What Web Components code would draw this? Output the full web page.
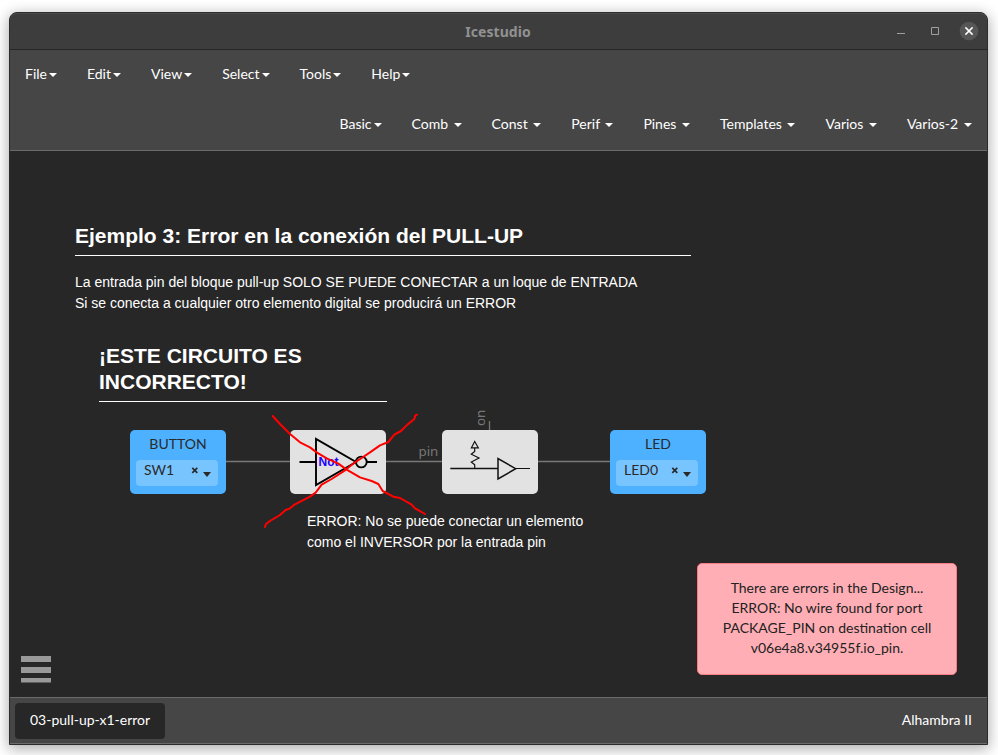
<!DOCTYPE html>
<html lang="es">
<head>
<meta charset="utf-8">
<title>Icestudio</title>
<style>
html,body{margin:0;height:100%;background:#fff}
body{box-sizing:border-box;width:998px;height:755px;padding:12px 10px 10px 9px;overflow:hidden;font:14px/20px Lato,sans-serif;color:#fff}
</style>
</head>
<body>
<ice-window></ice-window>
<script>
const define = (name, html) => customElements.define(name, class extends HTMLElement {
  constructor() {
    super();
    this.attachShadow({ mode: 'open' });
  }
  connectedCallback() {
    const t = document.createElement('template');
    t.innerHTML = html;
    this.shadowRoot.replaceChildren(t.content.cloneNode(true));
  }
});

define('ice-menu', `<style>
:host{display:block;padding:14px 15px 16px;white-space:pre}
i{display:inline-block;width:0;height:0;margin-left:2px;vertical-align:middle;border:4px solid transparent;border-top-color:#fff;border-bottom:0}
</style><slot></slot><i></i>`);

define('ice-titlebar', `<style>
:host{display:grid;grid-template-columns:1fr auto 1fr;align-items:center;height:37px;background:#3d3d3d;border-top:1px solid #4a4a4a;border-bottom:1px solid #262626;border-radius:7px 7px 0 0;box-sizing:border-box}
b{grid-column:2;font:bold 14px/20px "Noto Sans",sans-serif;color:#919191;letter-spacing:.05px;padding-top:1px;margin-right:1px}
svg{justify-self:end;margin:0 8px 2px 0}
</style><b><slot></slot></b>
<svg width="84" height="20" viewBox="0 0 84 20" fill="none"><path d="M2 12.5h8" stroke="#a0a0a0"/><path d="M36.5 6.5h7v7h-7z" stroke="#a0a0a0"/><circle cx="74" cy="10" r="9.3" fill="#565656"/><path d="M70.4 6.4l7.2 7.2M77.6 6.4l-7.2 7.2" stroke="#fff" stroke-width="1.5"/></svg>`);

define('ice-navbar', `<style>
:host{display:flex;flex-direction:column;height:101px;box-sizing:border-box;background:#464646;border-bottom:1px solid #6b6b6b}
nav{display:flex;height:50px}
.right{justify-content:flex-end;padding-right:.3px}
</style>
<nav><ice-menu>File</ice-menu><ice-menu>Edit</ice-menu><ice-menu>View</ice-menu><ice-menu>Select</ice-menu><ice-menu>Tools</ice-menu><ice-menu>Help</ice-menu></nav>
<nav class="right"><ice-menu>Basic</ice-menu><ice-menu>Comb </ice-menu><ice-menu>Const </ice-menu><ice-menu>Perif </ice-menu><ice-menu>Pines </ice-menu><ice-menu>Templates </ice-menu><ice-menu>Varios </ice-menu><ice-menu>Varios-2 </ice-menu></nav>`);

define('ice-io-block', `<style>
:host{display:flex;flex-direction:column;align-items:center;box-sizing:border-box;width:96px;height:64px;padding-top:4px;border-radius:5px;background:#4db1ff;color:#2a2a2a}
.name{line-height:20px;margin-bottom:6px}
.pin{display:flex;align-items:center;box-sizing:border-box;width:82px;height:26px;padding:0 6px 6px 8px;border-radius:4px;background:#78c4ff;margin-right:2px}
.v{flex:1}
svg{margin-top:2px}
</style><div class="name"><slot></slot></div>
<div class="pin"><span class="v"><slot name="pin"></slot></span><svg width="22" height="16" viewBox="0 0 22 16"><path d="M2.3 4.8l5 5M7.3 4.8l-5 5" stroke="#2a2a2a" stroke-width="1.7"/><path d="M13 9h8l-4 5z" fill="#2a2a2a"/></svg></div>`);

define('ice-block', `<style>
:host{display:block;width:96px;height:64px;border-radius:5px;background:#e2e2e2}
</style><slot></slot>`);

define('ice-note', `<style>
:host{display:block;font:14px/21px "Liberation Sans",Arial,sans-serif;white-space:pre-line}
:host([heading]){font-size:21px;line-height:26px;font-weight:bold;border-bottom:1px solid #fff;padding-bottom:6px}
</style><slot></slot>`);

define('ice-toast', `<style>
:host{display:block;box-sizing:border-box;width:260px;height:112px;padding:14px 24px;border:1px solid #f77c86;border-radius:5px;background:#ffaeb5;color:#222;text-align:center}
</style><slot></slot>`);

define('ice-canvas', `<style>
:host{display:block;position:relative;flex:1;background:#272727}
:host>*,svg.layer,ice-note,ice-block,ice-io-block,ice-toast,.burger{position:absolute}
.layer{inset:0;width:977px;height:546px}
.wire{font:13.3px "Noto Sans",sans-serif;fill:#777}
</style>
<svg class="layer" viewBox="10 151 977 546" fill="none"><path d="M226 461.5H290M386 461.5H442M538 461.5H610M489.5 421V430" stroke="#777" stroke-width="1.3"/><text class="wire" x="418.5" y="456">pin</text><text class="wire" transform="translate(485 426) rotate(-90)">on</text></svg>
<ice-note heading style="left:65px;top:72px;width:616px">Ejemplo 3: Error en la conexión del PULL-UP</ice-note>
<ice-note style="left:65px;top:121px">La entrada pin del bloque pull-up SOLO SE PUEDE CONECTAR a un loque de ENTRADA
Si se conecta a cualquier otro elemento digital se producirá un ERROR</ice-note>
<ice-note heading style="left:89px;top:192px;width:288px">¡ESTE CIRCUITO ES
INCORRECTO!</ice-note>
<ice-io-block style="left:120px;top:279px">BUTTON<span slot="pin">SW1</span></ice-io-block>
<ice-block style="left:280px;top:279px"><svg width="96" height="64" fill="none" stroke="#000" stroke-width="1.9"><text x="28.5" y="36" fill="#2000ff" stroke="none" style="font:bold 12px 'Liberation Sans',sans-serif">Not</text><path d="M9.5 32H26M26 9v46L66 32zM76.5 32H87"/><circle cx="71.3" cy="32" r="5.4"/></svg></ice-block>
<ice-block style="left:432px;top:279px"><svg width="96" height="64" fill="none" stroke="#111"><path d="M8.3 38.5H56M56 28.5v20.5L73.7 38.7z" stroke-width="1.5"/><path d="M73.7 38.5H88M32.7 11.5L29.4 17.8h6.9zM32.7 18v3.5l-3.4 2.7 7.7 3.8-7.7 4 3.4 2.7v4" stroke-width="1.2"/></svg></ice-block>
<ice-io-block style="left:600px;top:279px">LED<span slot="pin">LED0</span></ice-io-block>
<ice-note style="left:297px;top:360px">ERROR: No se puede conectar un elemento
como el INVERSOR por la entrada pin</ice-note>
<svg class="layer" viewBox="10 151 977 546" fill="none"><g transform="translate(255 400) scale(.33333)" stroke="#f00" stroke-width="6" stroke-linecap="round" stroke-linejoin="round"><path d="M53 48L75 72 105 102 135 127 165 142 185 157 215 175 250 191 275 209 315 232 350 243 370 252 383 273 415 290 435 294 470 314 480 325 510 342"/><path d="M486 44L481 46 478 57 455 76 438 93 418 104 400 126 375 136 345 157 320 174 300 187 270 211 230 237 200 254 182 278 165 290 120 313 105 325 92 330 75 345 45 363 33 372 30 381"/></g></svg>
<svg class="burger" style="left:11px;top:505px" width="30" height="27"><path d="M0 0h30v6H0zM0 11h30v6H0zM0 22h30v4.5H0z" fill="#999"/></svg>
<ice-toast style="left:687px;top:412px">There are errors in the Design...<br>ERROR: No wire found for port PACKAGE_PIN on destination cell v06e4a8.v34955f.io_pin.</ice-toast>`);

define('ice-footer', `<style>
:host{display:flex;align-items:center;justify-content:space-between;box-sizing:border-box;height:47px;padding:0 15px 0 5px;background:#464646;border-top:1px solid #6b6b6b;border-bottom:1px solid #6b6b6b}
.tab{box-sizing:border-box;width:150px;height:36px;padding:7px 0 7px 15px;white-space:nowrap;border-radius:4px;background:#272727;margin-top:1px}
span{margin-bottom:1px}
</style><div class="tab">03-pull-up-x1-error</div><span>Alhambra II</span>`);

define('ice-window', `<style>
:host{display:flex;flex-direction:column;box-sizing:border-box;width:979px;height:733px;border:1px solid #2c2c2c;border-radius:8px 8px 0 0;background:#464646;box-shadow:0 3px 14px 1px rgba(0,0,0,.32)}
</style><ice-titlebar>Icestudio</ice-titlebar><ice-navbar></ice-navbar><ice-canvas></ice-canvas><ice-footer></ice-footer>`);
</script>
</body>
</html>
